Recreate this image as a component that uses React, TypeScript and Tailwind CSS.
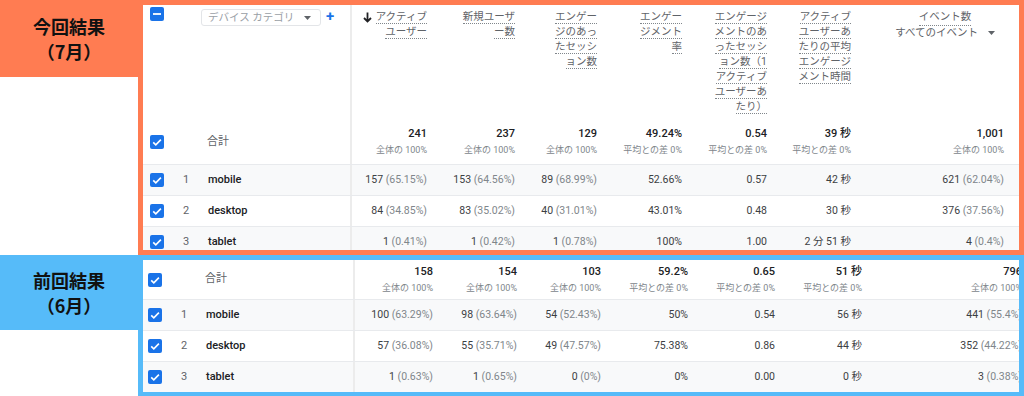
import React from "react";

const topCols = "grid grid-cols-[209px_79px_88px_82px_85px_85px_84px_1fr]";
const bottomCols = "grid grid-cols-[212px_82px_84px_84px_87px_87px_87px_160px]";

const headers: string[][] = [
  ["アクティブ", "ユーザー"],
  ["新規ユーザ", "ー数"],
  ["エンゲー", "ジのあっ", "たセッシ", "ョン数"],
  ["エンゲー", "ジメント", "率"],
  ["エンゲージ", "メントのあ", "ったセッシ", "ョン数（1", "アクティブ", "ユーザーあ", "たり）"],
  ["アクティブ", "ユーザーあ", "たりの平均", "エンゲージ", "メント時間"],
];

const subs = ["全体の 100%", "全体の 100%", "全体の 100%", "平均との差 0%", "平均との差 0%", "平均との差 0%", "全体の 100%"];

const current = {
  totals: ["241", "237", "129", "49.24%", "0.54", "39 秒", "1,001"],
  rows: [
    ["mobile", "157 (65.15%)", "153 (64.56%)", "89 (68.99%)", "52.66%", "0.57", "42 秒", "621 (62.04%)"],
    ["desktop", "84 (34.85%)", "83 (35.02%)", "40 (31.01%)", "43.01%", "0.48", "30 秒", "376 (37.56%)"],
    ["tablet", "1 (0.41%)", "1 (0.42%)", "1 (0.78%)", "100%", "1.00", "2 分 51 秒", "4 (0.4%)"],
  ],
};

const previous = {
  totals: ["158", "154", "103", "59.2%", "0.65", "51 秒", "796"],
  rows: [
    ["mobile", "100 (63.29%)", "98 (63.64%)", "54 (52.43%)", "50%", "0.54", "56 秒", "441 (55.4%)"],
    ["desktop", "57 (36.08%)", "55 (35.71%)", "49 (47.57%)", "75.38%", "0.86", "44 秒", "352 (44.22%)"],
    ["tablet", "1 (0.63%)", "1 (0.65%)", "0 (0%)", "0%", "0.00", "0 秒", "3 (0.38%)"],
  ],
};

function Check({ minus }: { minus?: boolean }) {
  return (
    <svg width="14" height="14" viewBox="0 0 14 14" className="shrink-0">
      <rect width="14" height="14" rx="2" fill="#1a73e8" />
      {minus ? (
        <rect x="3" y="6.1" width="8" height="1.8" fill="#fff" />
      ) : (
        <path d="M3.2 7.3 L5.8 9.8 L10.9 4.6" stroke="#fff" strokeWidth="1.6" fill="none" />
      )}
    </svg>
  );
}

function Caret() {
  return (
    <svg width="7" height="4" viewBox="0 0 7 4">
      <path d="M0 0 L7 0 L3.5 4 Z" fill="#5f6368" />
    </svg>
  );
}

function HeadLines({ lines, arrow }: { lines: string[]; arrow?: boolean }) {
  return (
    <div className="flex flex-col items-end pr-[4px] pt-[6px]">
      {lines.map((l, i) => (
        <div key={i} className="flex h-[15px] items-start">
          {arrow && i === 0 && (
            <svg width="9" height="11" viewBox="0 0 9 11" className="mr-[4px] mt-[1px]">
              <path d="M4.5 0.5 V9.5 M1 6 L4.5 9.5 L8 6" stroke="#202124" strokeWidth="1.8" fill="none" />
            </svg>
          )}
          <span className="border-b border-dotted border-[#80868b] text-[10.5px] leading-[12px] text-[#5f6368]">
            {l}
          </span>
        </div>
      ))}
    </div>
  );
}

function Val({ s }: { s: string }) {
  const i = s.indexOf(" (");
  if (i < 0) return <span className="text-[#3c4043]">{s}</span>;
  return (
    <span className="text-[#3c4043]">
      {s.slice(0, i)} <span className="text-[#80868b]">{s.slice(i + 1)}</span>
    </span>
  );
}

function DimCell({ pl, children }: { pl: string; children: React.ReactNode }) {
  return (
    <div className={`flex items-center border-r-2 border-[#ececec] ${pl}`}>{children}</div>
  );
}

function Table({
  cols,
  data,
  pl,
  lastPr,
  totalH,
  withHeader,
}: {
  cols: string;
  data: { totals: string[]; rows: string[][] };
  pl: string;
  lastPr: string;
  totalH: string;
  withHeader?: boolean;
}) {
  return (
    <div className="flex flex-col">
      {withHeader && (
        <div className={`${cols} h-[115px]`}>
          <div className="flex items-start border-r-2 border-[#ececec] pl-[7px] pt-[2px]">
            <Check minus />
            <div className="ml-[37px] mt-[2px] flex h-[17px] w-[120px] items-center justify-between rounded-[3px] border border-[#e3e5e8] pl-[6px] pr-[9px]">
              <span className="text-[10.5px] text-[#9aa0a6]">デバイス カテゴリ</span>
              <Caret />
            </div>
            <span className="ml-[5px] mt-[1px] text-[15px] font-bold leading-[17px] text-[#1a73e8]">+</span>
          </div>
          {headers.map((h, i) => (
            <HeadLines key={i} lines={h} arrow={i === 0} />
          ))}
          <div className="flex justify-end pr-[24px] pt-[6px]">
            <div className="flex flex-col items-center">
              <span className="h-[15px] border-b border-dotted border-[#80868b] text-[10.5px] leading-[12px] text-[#5f6368]">
                イベント数
              </span>
              <div className="flex items-center gap-[10px]">
                <span className="text-[10.5px] leading-[13px] text-[#5f6368]">すべてのイベント</span>
                <Caret />
              </div>
            </div>
          </div>
        </div>
      )}
      <div className={`${cols} ${totalH}`}>
        <DimCell pl={pl}>
          <Check />
          <span className="ml-[43px] text-[11px] text-[#5f6368]">合計</span>
        </DimCell>
        {data.totals.map((t, i) => (
          <div
            key={i}
            className={`flex flex-col items-end justify-center ${i === 6 ? lastPr : "pr-[4px]"}`}
          >
            <span className="text-[11px] font-medium leading-[14px] text-[#202124]">{t}</span>
            <span className="mt-[3px] whitespace-nowrap text-[9px] leading-[13px] text-[#80868b]">{subs[i]}</span>
          </div>
        ))}
      </div>
      {data.rows.map((r, ri) => (
        <div
          key={ri}
          className={`${cols} h-[31px] shrink-0 border-t border-[#e8eaed] ${ri === 1 ? "bg-white" : "bg-[#f8f9fa]"}`}
        >
          <DimCell pl={pl}>
            <Check />
            <span className="w-[44px] text-center text-[11px] text-[#5f6368]">{ri + 1}</span>
            <span className="text-[11px] font-medium text-[#202124]">{r[0]}</span>
          </DimCell>
          {r.slice(1).map((v, i) => (
            <div
              key={i}
              className={`flex items-center justify-end whitespace-nowrap text-[10.5px] ${i === 6 ? lastPr : "pr-[4px]"}`}
            >
              <Val s={v} />
            </div>
          ))}
        </div>
      ))}
    </div>
  );
}

export default function App() {
  return (
    <div className="flex h-[396px] w-[1024px] flex-col overflow-hidden bg-white font-['Roboto','Noto_Sans_CJK_JP',sans-serif]">
      <div className="flex h-[255px] shrink-0">
        <div className="w-[138px] shrink-0">
          <div className="flex h-[77px] flex-col items-center justify-center bg-[#ff7c52] font-['Noto_Sans_CJK_JP',sans-serif] text-[18px] font-bold leading-[25px] text-[#111]">
            <span>今回結果</span>
            <span>（7月）</span>
          </div>
        </div>
        <div className="min-w-0 flex-1 overflow-hidden border-[5px] border-[#ff7c52] bg-white">
          <Table cols={topCols} data={current} pl="pl-[7px]" lastPr="pr-[15px]" totalH="h-[44px]" withHeader />
        </div>
      </div>
      <div className="flex h-[142px] shrink-0">
        <div className="w-[138px] shrink-0">
          <div className="flex h-[75px] flex-col items-center justify-center bg-[#56bbf9] font-['Noto_Sans_CJK_JP',sans-serif] text-[18px] font-bold leading-[25px] text-[#111]">
            <span>前回結果</span>
            <span>（6月）</span>
          </div>
        </div>
        <div className="min-w-0 flex-1 overflow-hidden border-[5px] border-[#56bbf9] bg-white">
          <Table cols={bottomCols} data={previous} pl="pl-[5px]" lastPr="pr-[4px]" totalH="h-[39px]" />
        </div>
      </div>
    </div>
  );
}
